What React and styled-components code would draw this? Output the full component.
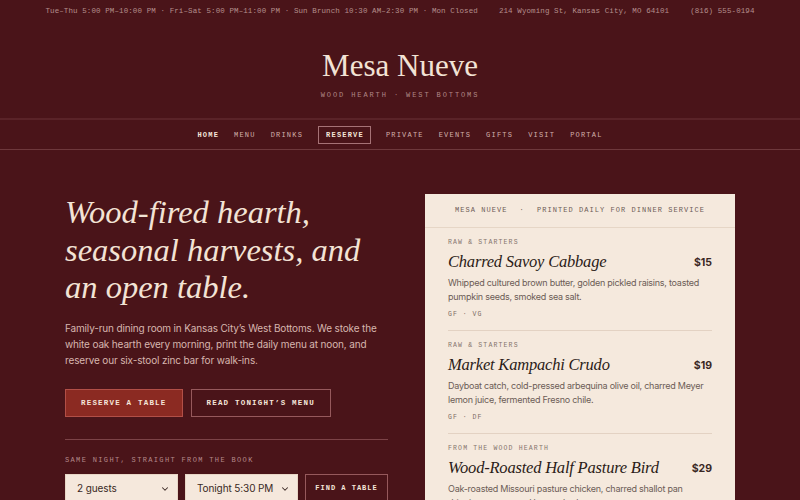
import React from "react";
import styled, { createGlobalStyle } from "styled-components";
import { ChevronDown } from "lucide-react";

const serif = `"Liberation Serif", "Times New Roman", serif`;
const mono = `"Liberation Mono", "DejaVu Sans Mono", monospace`;
const sans = `Inter, "Noto Sans", Arial, sans-serif`;

const Global = createGlobalStyle`
  html, body { margin: 0; padding: 0; background: #4a1419; }
  body { font-family: ${sans}; color: #f2e2d4; overflow: hidden; }
  * { box-sizing: border-box; }
`;

const Page = styled.div`
  width: 800px;
  height: 500px;
  overflow: hidden;
  background: #4a1419;
`;

const TopBar = styled.div`
  height: 22px;
  display: flex;
  justify-content: center;
  align-items: center;
  gap: 21px;
  font-family: ${mono};
  font-size: 7.5px;
  letter-spacing: 0.1px;
  color: #b48e8c;
  white-space: nowrap;
`;

const Header = styled.header`
  padding: 28px 0 18px;
  text-align: center;
  border-bottom: 2px solid #5a2328;
`;

const Brand = styled.h1`
  margin: 0;
  font-family: ${serif};
  font-weight: 400;
  font-size: 31px;
  line-height: 31px;
  color: #f3e3d5;
`;

const Tagline = styled.div`
  margin-top: 9px;
  font-family: ${mono};
  font-size: 7px;
  line-height: 10px;
  letter-spacing: 1.9px;
  color: #b08786;
`;

const Nav = styled.nav`
  height: 30px;
  border-bottom: 1px solid #6e383c;
  display: flex;
  justify-content: center;
  align-items: center;
  gap: 15px;
`;

const NavItem = styled.a`
  font-family: ${mono};
  font-size: 7px;
  letter-spacing: 1.2px;
  line-height: 16px;
  text-decoration: none;
  color: ${(p) => (p.$active || p.$boxed ? "#f5e6da" : "#d2b0ab")};
  font-weight: ${(p) => (p.$active || p.$boxed ? 700 : 400)};
  padding: ${(p) => (p.$boxed ? "0 6px 0 7px" : "0")};
  border: ${(p) => (p.$boxed ? "1px solid #a67276" : "none")};
`;

const Main = styled.main`
  width: 670px;
  margin: 0 auto;
  padding-top: 44px;
  display: grid;
  grid-template-columns: 323px 310px;
  justify-content: space-between;
  align-items: start;
`;

const Hero = styled.section`
  display: flex;
  flex-direction: column;
`;

const Headline = styled.h2`
  margin: 0;
  font-family: ${serif};
  font-style: italic;
  font-weight: 400;
  font-size: 32.5px;
  line-height: 37.5px;
  color: #f3e3d5;
`;

const Lede = styled.p`
  margin: 13px 0 0;
  font-size: 10px;
  letter-spacing: -0.15px;
  line-height: 16px;
  color: #d7b6af;
`;

const Actions = styled.div`
  margin-top: 21px;
  display: flex;
  gap: 8px;
`;

const Button = styled.button`
  height: 28px;
  padding: 0 ${(p) => (p.$pad || 15)}px;
  font-family: ${mono};
  font-size: ${(p) => p.$size || 7.5}px;
  letter-spacing: ${(p) => p.$ls || 1.2}px;
  font-weight: 700;
  color: #f5e6da;
  background: ${(p) => (p.$primary ? "#8b2a22" : "transparent")};
  border: 1px solid ${(p) => (p.$primary ? "#b24f47" : "#96595c")};
  cursor: pointer;
  white-space: nowrap;
`;

const Divider = styled.hr`
  margin: 22px 0 0;
  border: 0;
  border-top: 1px solid #7c4347;
`;

const Label = styled.div`
  margin-top: 15px;
  font-family: ${mono};
  font-size: 7px;
  line-height: 10px;
  letter-spacing: 1.35px;
  color: #b4898a;
`;

const FormRow = styled.div`
  margin-top: 9px;
  display: grid;
  grid-template-columns: 113px 113px 1fr;
  gap: 7px;
`;

const SelectWrap = styled.div`
  position: relative;
  height: 29px;
`;

const Select = styled.select`
  appearance: none;
  -webkit-appearance: none;
  width: 100%;
  height: 100%;
  padding: 0 11px;
  border: 1px solid #e8d6c6;
  border-radius: 0;
  background: #f5e8dc;
  font-family: ${sans};
  font-size: 10px;
  letter-spacing: -0.1px;
  color: #3a2824;
`;

const Chevron = styled(ChevronDown)`
  position: absolute;
  right: 8px;
  top: 10px;
  color: #3a2824;
  pointer-events: none;
`;

const Card = styled.article`
  background: #f5e9dd;
  min-height: 330px;
`;

const CardHead = styled.div`
  padding: 11px 0 12px;
  border-bottom: 1px solid #e6d6c6;
  display: flex;
  justify-content: center;
  gap: 12px;
  font-family: ${mono};
  font-size: 7px;
  line-height: 10px;
  letter-spacing: 1.05px;
  color: #6d5c57;
`;

const Items = styled.div`
  padding: 0 23px;
`;

const Item = styled.div`
  padding: 10px 0 10px;
  border-bottom: 1px solid #e3d2c3;
`;

const Category = styled.div`
  font-family: ${mono};
  font-size: 6.5px;
  line-height: 10px;
  letter-spacing: 1.15px;
  color: #86756e;
`;

const TitleRow = styled.div`
  margin-top: 4px;
  display: flex;
  justify-content: space-between;
  align-items: center;
`;

const Title = styled.h3`
  margin: 0;
  font-family: ${serif};
  font-style: italic;
  font-weight: 400;
  font-size: 16.5px;
  letter-spacing: -0.2px;
  line-height: 20px;
  color: #2b1b17;
`;

const Price = styled.span`
  font-family: ${sans};
  font-weight: 700;
  font-size: 10.5px;
  color: #3a2723;
`;

const Desc = styled.p`
  margin: 4px 0 0;
  font-size: 9px;
  letter-spacing: -0.25px;
  line-height: 14px;
  color: #6c5c56;
`;

const Tags = styled.div`
  margin-top: 6px;
  font-family: ${mono};
  font-size: 6.5px;
  line-height: 10px;
  letter-spacing: 1px;
  color: #7d6d66;
`;

const menu = [
  {
    cat: "RAW & STARTERS",
    title: "Charred Savoy Cabbage",
    price: "$15",
    desc: "Whipped cultured brown butter, golden pickled raisins, toasted pumpkin seeds, smoked sea salt.",
    tags: "GF · VG",
  },
  {
    cat: "RAW & STARTERS",
    title: "Market Kampachi Crudo",
    price: "$19",
    desc: "Dayboat catch, cold-pressed arbequina olive oil, charred Meyer lemon juice, fermented Fresno chile.",
    tags: "GF · DF",
  },
  {
    cat: "FROM THE WOOD HEARTH",
    title: "Wood-Roasted Half Pasture Bird",
    price: "$29",
    desc: "Oak-roasted Missouri pasture chicken, charred shallot pan drippings, preserved lemon, herbs.",
    tags: "GF",
  },
];

const navItems = ["HOME", "MENU", "DRINKS", "RESERVE", "PRIVATE", "EVENTS", "GIFTS", "VISIT", "PORTAL"];

export default function App() {
  return (
    <Page>
      <Global />
      <TopBar>
        <span>Tue–Thu 5:00 PM–10:00 PM · Fri–Sat 5:00 PM–11:00 PM · Sun Brunch 10:30 AM–2:30 PM · Mon Closed</span>
        <span>214 Wyoming St, Kansas City, MO 64101</span>
        <span>(816) 555-0194</span>
      </TopBar>
      <Header>
        <Brand>Mesa Nueve</Brand>
        <Tagline>WOOD HEARTH · WEST BOTTOMS</Tagline>
      </Header>
      <Nav>
        {navItems.map((n) => (
          <NavItem key={n} href="#" $active={n === "HOME"} $boxed={n === "RESERVE"}>
            {n}
          </NavItem>
        ))}
      </Nav>
      <Main>
        <Hero>
          <Headline>
            Wood-fired hearth,
            <br />
            seasonal harvests, and
            <br />
            an open table.
          </Headline>
          <Lede>
            Family-run dining room in Kansas City’s West Bottoms. We stoke the white oak hearth every morning, print
            the daily menu at noon, and reserve our six-stool zinc bar for walk-ins.
          </Lede>
          <Actions>
            <Button $primary $pad={15}>RESERVE A TABLE</Button>
            <Button $pad={15}>READ TONIGHT’S MENU</Button>
          </Actions>
          <Divider />
          <Label>SAME NIGHT, STRAIGHT FROM THE BOOK</Label>
          <FormRow>
            <SelectWrap>
              <Select defaultValue="2">
                <option value="2">2 guests</option>
                <option value="4">4 guests</option>
              </Select>
              <Chevron size={10} strokeWidth={2.5} />
            </SelectWrap>
            <SelectWrap>
              <Select defaultValue="530">
                <option value="530">Tonight 5:30 PM</option>
                <option value="700">Tonight 7:00 PM</option>
              </Select>
              <Chevron size={10} strokeWidth={2.5} />
            </SelectWrap>
            <Button $pad={8} $size={7} $ls={1}>FIND A TABLE</Button>
          </FormRow>
        </Hero>
        <Card>
          <CardHead>
            <span>MESA NUEVE</span>
            <span>·</span>
            <span>PRINTED DAILY FOR DINNER SERVICE</span>
          </CardHead>
          <Items>
            {menu.map((m) => (
              <Item key={m.title}>
                <Category>{m.cat}</Category>
                <TitleRow>
                  <Title>{m.title}</Title>
                  <Price>{m.price}</Price>
                </TitleRow>
                <Desc>{m.desc}</Desc>
                <Tags>{m.tags}</Tags>
              </Item>
            ))}
          </Items>
        </Card>
      </Main>
    </Page>
  );
}
